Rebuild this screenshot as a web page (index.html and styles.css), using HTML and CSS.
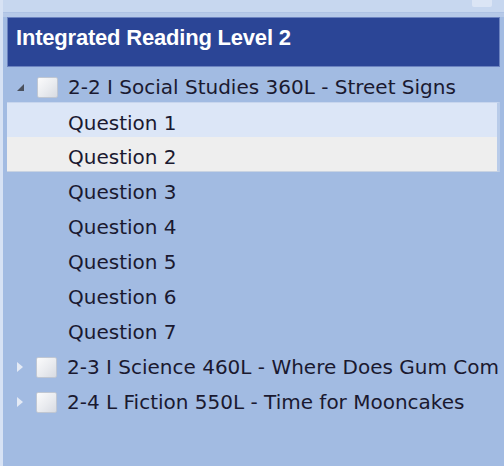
FILE: index.html
```html
<!DOCTYPE html>
<html lang="en">
<head>
  <meta charset="UTF-8" />
  <title>Integrated Reading Level 2</title>
  <link rel="stylesheet" href="styles.css">
</head>
<body>

  <div class="panel">
    <div class="toolbar">
      <span class="tool-btn"></span>
    </div>

    <div class="tree">
      <h2 class="tree-title">Integrated Reading Level 2</h2>

      <ul class="nodes">
        <li class="node open">
          <div class="row">
            <span class="toggle"></span>
            <span class="check"></span>
            <span class="label">2-2 I Social Studies 360L - Street Signs</span>
          </div>
          <ul class="leaves">
            <li class="leaf hover">Question 1</li>
            <li class="leaf selected">Question 2</li>
            <li class="leaf">Question 3</li>
            <li class="leaf">Question 4</li>
            <li class="leaf">Question 5</li>
            <li class="leaf">Question 6</li>
            <li class="leaf">Question 7</li>
          </ul>
        </li>
        <li class="node">
          <div class="row">
            <span class="toggle"></span>
            <span class="check"></span>
            <span class="label">2-3 I Science 460L - Where Does Gum Com</span>
          </div>
        </li>
        <li class="node">
          <div class="row">
            <span class="toggle"></span>
            <span class="check"></span>
            <span class="label">2-4 L Fiction 550L - Time for Mooncakes</span>
          </div>
        </li>
      </ul>
    </div>
  </div>

</body>
</html>
```

FILE: styles.css
```css
* {
  box-sizing: border-box;
}
body {
  margin: 0;
  background: #a2bbe2;
  font-family: "DejaVu Sans", sans-serif;
  overflow: hidden;
}
.panel {
  height: 466px;
  border-left: 3px solid #d7e2f4;
  background: #a2bbe2;
}
.toolbar {
  height: 13px;
  background: #c7d7ef;
  border-bottom: 1px solid #aec2e4;
  position: relative;
}
.tool-btn {
  position: absolute;
  right: 12px;
  top: 0;
  width: 20px;
  height: 7px;
  background: #dbe5f5;
  border-radius: 0 0 2px 2px;
}
.tree {
  padding: 4px 4px 0 4px;
  background: linear-gradient(#b6c9e8 0, #b6c9e8 4px, #a2bbe2 4px);
}
.tree-title {
  margin: 0;
  height: 50px;
  line-height: 40px;
  padding-left: 8px;
  background: #2b4596;
  border: 1px solid #6c83c0;
  color: #fff;
  font-family: "Liberation Sans", Arial, sans-serif;
  font-size: 22px;
  font-weight: bold;
  letter-spacing: -0.2px;
}
.nodes, .leaves {
  list-style: none;
  margin: 0;
  padding: 0;
}
.row, .leaf {
  height: 35px;
  padding-top: 5px;
  display: flex;
  align-items: center;
  font-size: 20px;
  color: #1a1930;
  white-space: nowrap;
}
.toggle {
  flex-shrink: 0;
  width: 0;
  height: 0;
  margin-left: 10px;
  border-top: 5px solid transparent;
  border-bottom: 5px solid transparent;
  border-left: 6px solid #e4eaf5;
}
.node.open .toggle {
  border-top: 7px solid transparent;
  border-bottom: 0;
  border-left: 0;
  border-right: 7px solid #4a505d;
  margin-top: 1px;
}
.check {
  flex-shrink: 0;
  width: 21px;
  height: 21px;
  margin-left: 13px;
  margin-right: 10px;
  border: 1px solid #c0c7d3;
  border-radius: 2px;
  background: linear-gradient(135deg, #fbfbfc 0%, #e9ebef 55%, #d8dbe2 100%);
}
.leaf {
  padding-left: 61px;
  border-right: 3px solid transparent;
}
.leaf.hover {
  background: #dce6f7;
  border-top: 1px solid #c8d6ee;
  border-right-color: #b8cbe9;
}
.leaf.selected {
  background: #eeeeee;
  border-bottom: 1px solid #c9d3e2;
  border-right-color: #b8cbe9;
}
```
